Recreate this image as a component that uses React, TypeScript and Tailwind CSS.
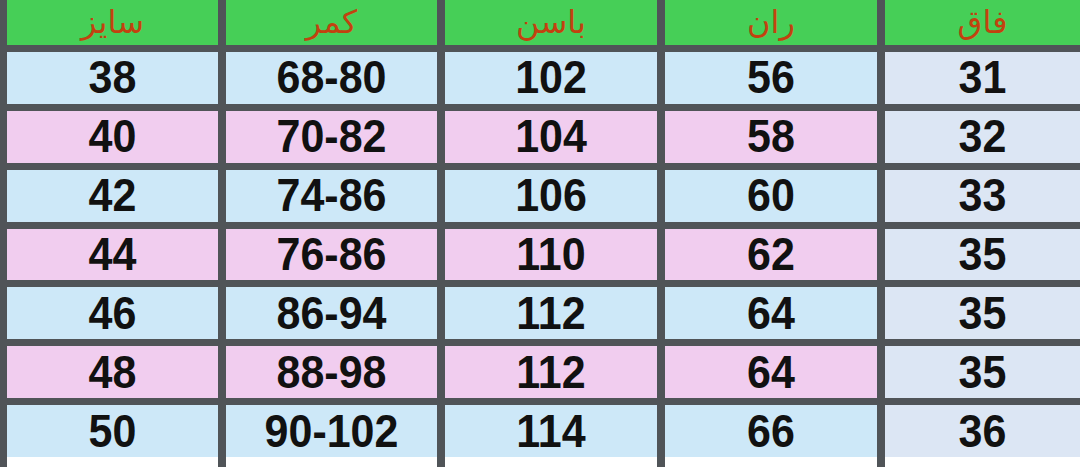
const headers = ['سایز', 'کمر', 'باسن', 'ران', 'فاق'];

const rows = [
  ['38', '68-80', '102', '56', '31'],
  ['40', '70-82', '104', '58', '32'],
  ['42', '74-86', '106', '60', '33'],
  ['44', '76-86', '110', '62', '35'],
  ['46', '86-94', '112', '64', '35'],
  ['48', '88-98', '112', '64', '35'],
  ['50', '90-102', '114', '66', '36'],
];

export default function App() {
  return (
    <div className="w-[1080px] h-[467px] overflow-hidden bg-[#505458] pl-[7px]">
      {/* Size table */}
      <div className="grid h-[457px] grid-cols-[211px_211px_212px_212px_1fr] grid-rows-[45px_repeat(7,minmax(0,1fr))] gap-x-[8px] gap-y-[7px]">
        {headers.map((h) => (
          <div
            key={h}
            dir="rtl"
            className="flex items-start justify-center bg-[#46cf57] pt-[2px] text-[32px] leading-[40px] text-[#c2420f] [font-family:'DejaVu_Sans',sans-serif]"
          >
            {h}
          </div>
        ))}
        {rows.map((row, i) =>
          row.map((cell, j) => {
            const bg =
              j === 4 ? 'bg-[#dce6f4]' : i % 2 === 0 ? 'bg-[#cde8f8]' : 'bg-[#f1cdef]';
            return (
              <div
                key={`${i}-${j}`}
                className={`flex items-center justify-center ${bg} text-[43px] font-bold leading-none text-[#111] [font-family:'Liberation_Sans',Arial,sans-serif]`}
              >
                <span className="inline-block scale-y-[1.06]">{cell}</span>
              </div>
            );
          })
        )}
      </div>
      {/* White row cut off at the bottom */}
      <div className="grid h-[10px] grid-cols-[211px_211px_212px_212px_1fr] gap-x-[8px]">
        {headers.map((h) => (
          <div key={h} className="bg-white" />
        ))}
      </div>
    </div>
  );
}
